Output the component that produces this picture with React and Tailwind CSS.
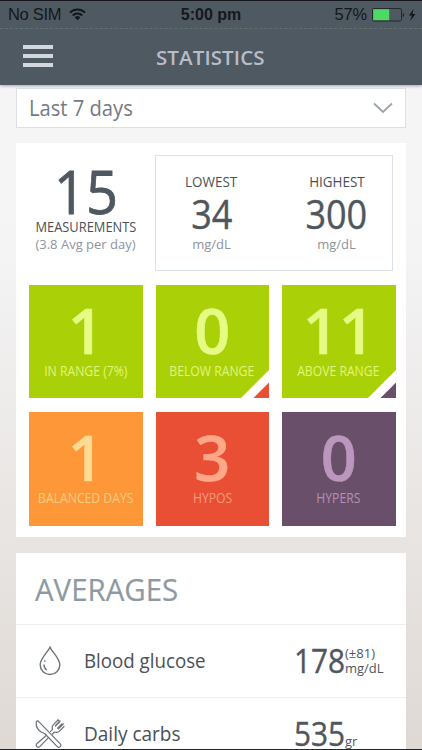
import { useState } from "react";

const ranges = [
  { value: "7", label: "Last 7 days" },
];

const tiles = [
  { value: "1", label: "IN RANGE (7%)", box: "bg-[#aad108]", num: "text-[#e6fb84]", text: "text-[#e0f57c]" },
  { value: "0", label: "BELOW RANGE", box: "bg-[#aad108]", num: "text-[#e6fb84]", text: "text-[#e0f57c]", corner: "#e84f35" },
  { value: "11", label: "ABOVE RANGE", box: "bg-[#aad108]", num: "text-[#e6fb84]", text: "text-[#e0f57c]", corner: "#6a4f6a" },
  { value: "1", label: "BALANCED DAYS", box: "bg-[#fe9738]", num: "text-[#fedb93]", text: "text-[#fdcc83]" },
  { value: "3", label: "HYPOS", box: "bg-[#e84f35]", num: "text-[#ffa887]", text: "text-[#fa9a7c]" },
  { value: "0", label: "HYPERS", box: "bg-[#6a4f6a]", num: "text-[#bb96bd]", text: "text-[#b48fb6]" },
];

const StatusBar = () => (
  <div className="relative flex h-7 items-center justify-between border-t border-[#14161c] pl-2 pr-[5px] font-['Liberation_Sans'] text-[17px] text-[#14171c]">
    <div className="flex items-center gap-2">
      <span className="text-[16.5px] tracking-[-0.3px]">No SIM</span>
      <svg width="17" height="13" viewBox="0 0 17 13" fill="none" stroke="#14171c" strokeWidth="2">
        <path d="M1 4.6a10.6 10.6 0 0 1 15 0" />
        <path d="M3.7 7.5a6.8 6.8 0 0 1 9.6 0" />
        <path d="M8.5 12.2 5.7 9.4a4 4 0 0 1 5.6 0z" fill="#14171c" stroke="none" />
      </svg>
    </div>
    <span className="absolute left-1/2 -translate-x-1/2 whitespace-nowrap text-[16px] font-bold">5:00 pm</span>
    <div className="flex items-center">
      <span className="mr-[5px] text-[16.5px] tracking-[-0.2px]">57%</span>
      <svg width="45" height="14" viewBox="0 0 45 14">
        <rect x="0.5" y="0.5" width="29" height="12.5" rx="1.5" fill="none" stroke="#252a31" />
        <rect x="1.2" y="1.2" width="16" height="11" fill="#4cd964" />
        <path d="M30.8 5v4c1.6-.5 1.6-3.5 0-4z" fill="#14171c" />
        <path d="M41.5 1 37 7.6h2.8L38.2 13 43.5 6h-3z" fill="#14171c" />
      </svg>
    </div>
  </div>
);

const Header = () => (
  <header className="h-[85px] shrink-0 bg-[#4f5961] shadow-[0_1px_3px_rgba(60,65,85,0.45)]">
    <StatusBar />
    <div className="border-t border-dashed border-[#61706f]" />
    <div className="flex h-[54px] items-center">
      <button className="ml-[23px] flex w-[30px] flex-col gap-[5px]" aria-label="Menu">
        <span className="h-1 bg-[#d4d7de]" />
        <span className="h-1 bg-[#d4d7de]" />
        <span className="h-1 bg-[#d4d7de]" />
      </button>
      <h1 className="ml-[103px] mt-0.5 text-[20.5px] font-semibold leading-6 tracking-[0.1px] text-[#b8bcc9]">
        STATISTICS
      </h1>
    </div>
  </header>
);

const Extreme = ({ title, value }) => (
  <div className="flex w-[111px] flex-col items-center pt-4">
    <span className="scale-x-[0.96] text-[14px] leading-5 text-[#4a5058]">{title}</span>
    <span className="mt-px scale-x-[0.9] text-[40px] leading-[41px] text-[#4f565e] [-webkit-text-stroke:0.4px]">{value}</span>
    <span className="text-[13px] leading-5 text-[#8d949c]">mg/dL</span>
  </div>
);

const Tile = ({ tile }) => (
  <div className={`relative flex h-[113.5px] flex-col items-center ${tile.box}`}>
    <span className={`mt-[13px] text-[63px] font-semibold leading-[64px] [-webkit-text-stroke:0.5px] ${tile.num}`}>{tile.value}</span>
    <span className={`mt-px scale-x-[0.87] whitespace-nowrap text-[14px] leading-4 ${tile.text}`}>
      {tile.label}
    </span>
    {tile.corner && (
      <svg className="absolute bottom-0 right-0" width="28" height="28" viewBox="0 0 28 28">
        <path d="M28 0v28H0z" fill="#fff" />
        <path d="M28 12.5V28H12.5z" fill={tile.corner} />
      </svg>
    )}
  </div>
);

const DropIcon = () => (
  <svg width="22" height="30" viewBox="0 0 22 30" fill="none" stroke="#6d737b" strokeWidth="1.4">
    <path d="M11 1.2C9 6 1.2 12 1.2 19a9.800 9.500 0 0 0 19.600 0C20.800 12 13 6 11 1.200z" />
    <path d="M5 18.500c0 2.800 1 4.400 2.700 5.500" />
    <path d="M5.700 14.200v1.500" />
  </svg>
);

const CutleryIcon = () => (
  <svg width="30" height="30" viewBox="0 0 30 30" fill="none" stroke="#6d737b" strokeWidth="1.2" strokeLinejoin="round" strokeLinecap="round">
    <path d="M11.200 16.500 1.800 24.800c-1.600 1.800 1 4.600 2.900 2.800l8.800-9" />
    <path d="m15.500 12.400 2-2c-.8-2.200-.2-3.700 1.200-5L23 1" />
    <path d="m17.500 15 2-2c2 .8 3.900.2 5.200-1.200L29 7.500" />
    <path d="m24.800 2.800-4.300 4.400M26.800 4.800l-4.300 4.400M23 1l1.800 1.800M25 1.800l-4.500 4.600M28.300 5l-4.800 4.800" />
    <path d="M1.500 2.500C.5 7 3 11 6.500 13.200l3.200 1.300L22.500 27.800c1.800 1.600 4.400-1 2.800-2.900L4 2.800C3 1.800 2 1.500 1.500 2.500z" />
  </svg>
);

const App = () => {
  const [range] = useState(ranges[0]);

  return (
    <div className="flex h-[750px] w-[422px] flex-col overflow-hidden border-b border-[#25262a] bg-linear-to-b from-[#f5f5f6] from-30% to-[#dfd9d4] font-['Open_Sans',sans-serif]">
      <Header />

      <main className="flex flex-col px-4">
        {/* RANGE SELECT */}
        <button className="mt-[3px] flex h-10 shrink-0 items-center justify-between border border-[#dcdfe8] bg-white pl-3 pr-3">
          <span className="origin-left scale-x-[0.96] text-[21px] leading-6 text-[#737b83]">{range.label}</span>
          <svg width="20" height="12" viewBox="0 0 20 12" fill="none" stroke="#9ba4ac" strokeWidth="1.8">
            <path d="m1 1.500 9 8.500 9-8.500" />
          </svg>
        </button>

        {/* SUMMARY */}
        <section className="mt-[15px] h-[394px] shrink-0 bg-white px-[13px] pt-3">
          <div className="flex h-[116px]">
            <div className="flex w-[113px] flex-col items-center pt-1.5">
              <span className="mt-px scale-x-[0.92] text-[61px] leading-[58px] text-[#4f575f] [-webkit-text-stroke:0.8px]">15</span>
              <span className="-mt-px scale-x-[0.92] whitespace-nowrap text-[14px] leading-4 text-[#4a5058]">MEASUREMENTS</span>
              <span className="-mt-px whitespace-nowrap text-[13px] leading-5 text-[#8d949c]">(3.8 Avg per day)</span>
            </div>
            <div className="ml-[13px] flex w-[238px] justify-between border border-[#dce0e8]">
              <Extreme title="LOWEST" value="34" />
              <Extreme title="HIGHEST" value="300" />
            </div>
          </div>

          <div className="mt-[13.5px] grid grid-cols-[113.5px_113.5px_113.5px] gap-x-[13px] gap-y-3.5">
            {tiles.map((tile) => (
              <Tile key={tile.label} tile={tile} />
            ))}
          </div>
        </section>

        {/* AVERAGES */}
        <section className="mt-4 shrink-0 bg-white">
          <h2 className="h-[71px] pl-[19px] pt-4 text-[31px] leading-10 text-[#8e9aa3] [-webkit-text-stroke:0.2px]">
            <span className="inline-block origin-left scale-x-[0.95]">AVERAGES</span>
          </h2>
          <div className="flex h-[73px] items-center border-t border-[#eeeff1] pl-[23px]">
            <DropIcon />
            <span className="ml-[23px] w-[210px] origin-left scale-x-[0.935] text-[20px] leading-6 text-[#4a5058]">Blood glucose</span>
            <span className="w-[51px] origin-left scale-x-[0.9] text-[33px] leading-9 text-[#4f565e] [-webkit-text-stroke:0.4px]">178</span>
            <div className="flex flex-col text-[13px] leading-[15px] text-[#4f565e]">
              <span>(±81)</span>
              <span>mg/dL</span>
            </div>
          </div>
          <div className="flex h-[73px] items-center border-t border-[#eeeff1] pl-[19px]">
            <CutleryIcon />
            <span className="ml-[19px] w-[210px] origin-left scale-x-[0.95] text-[20px] leading-6 text-[#4a5058]">Daily carbs</span>
            <span className="w-[51px] origin-left scale-x-[0.9] text-[33px] leading-9 text-[#4f565e] [-webkit-text-stroke:0.4px]">535</span>
            <span className="mt-3.5 text-[13px] leading-4 text-[#4f565e]">gr</span>
          </div>
        </section>
      </main>
    </div>
  );
};

export default App;
